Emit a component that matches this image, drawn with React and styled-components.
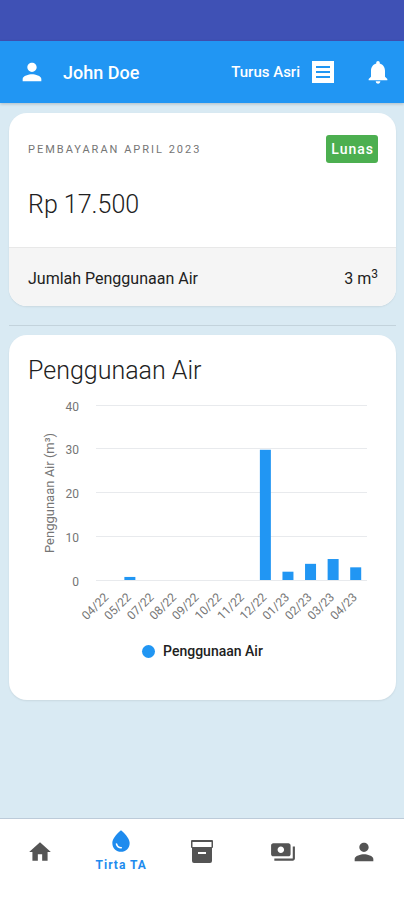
import React from "react";
import styled, { createGlobalStyle } from "styled-components";
import {
  MdHome,
  MdNotifications,
  MdPayments,
  MdPerson,
  MdWaterDrop,
} from "react-icons/md";

const GlobalStyle = createGlobalStyle`
  * {
    box-sizing: border-box;
  }
  body {
    margin: 0;
    background: #d9eaf3;
    font-family: Roboto, "Liberation Sans", sans-serif;
    color: #212121;
  }
`;

const Page = styled.div`
  display: flex;
  flex-direction: column;
  min-height: 100vh;
`;

const StatusBar = styled.div`
  height: 41px;
  background: #3f51b5;
`;

const Header = styled.header`
  display: flex;
  align-items: center;
  height: 62px;
  padding: 0 12px 0 18px;
  background: #2196f3;
  color: #fff;
  box-shadow: 0 1px 3px rgba(0, 0, 0, 0.2);
`;

const UserName = styled.h1`
  flex: 1;
  margin: 0 0 0 17px;
  font-size: 18px;
  font-weight: 500;
`;

const IconButton = styled.button`
  display: flex;
  padding: 0;
  border: 0;
  background: none;
  color: inherit;
  cursor: pointer;
`;

const AreaButton = styled(IconButton)`
  align-items: center;
  gap: 12px;
  margin-right: 30px;
  font-family: inherit;
  font-size: 15px;
  font-weight: 500;
`;

const Main = styled.main`
  flex: 1;
  padding: 10px 8px 10px 9px;
`;

const Card = styled.section`
  overflow: hidden;
  border-radius: 18px;
  background: #fff;
  box-shadow: 0 1px 2px rgba(0, 0, 0, 0.08);
`;

const BillTop = styled.div`
  height: 134px;
  padding: 22px 18px 0 19px;
`;

const BillRow = styled.div`
  display: flex;
  align-items: center;
  justify-content: space-between;
`;

const Overline = styled.h2`
  margin: 0;
  font-size: 11px;
  font-weight: 400;
  letter-spacing: 2px;
  color: #757575;
`;

const Badge = styled.span`
  padding: 0 4px 0 5px;
  border-radius: 3px;
  background: #4caf50;
  color: #fff;
  font-size: 14px;
  font-weight: 500;
  letter-spacing: 1px;
  line-height: 28px;
`;

const Amount = styled.p`
  margin: 27px 0 0;
  font-size: 25px;
  font-weight: 300;
  line-height: 30px;
`;

const Usage = styled(BillRow)`
  height: 59px;
  padding: 2px 18px 0 19px;
  border-top: 1px solid #e8e8e8;
  background: #f5f5f5;
  font-size: 16px;

  sup {
    font-size: 12px;
    line-height: 0;
  }
`;

const Divider = styled.hr`
  height: 1px;
  margin: 19px 0 9px;
  border: 0;
  background: #c3d3dc;
`;

const ChartCard = styled(Card)`
  padding-bottom: 39px;
`;

const ChartTitle = styled.h2`
  margin: 0;
  padding: 21px 19px 9px;
  font-size: 25px;
  font-weight: 300;
  line-height: 30px;
`;

const Chart = styled.svg`
  display: block;
  width: 100%;
  font-size: 12px;
  fill: #757575;

  line {
    stroke: #e8eaed;
    stroke-width: 1;
  }
`;

const AxisTitle = styled.text`
  font-size: 13px;
`;

const Legend = styled.div`
  display: flex;
  align-items: center;
  justify-content: center;
  gap: 8px;
  line-height: 20px;
  font-size: 14px;
  font-weight: 500;
`;

const LegendDot = styled.span`
  width: 13px;
  height: 13px;
  border-radius: 50%;
  background: #2196f3;
`;

const Nav = styled.nav`
  display: grid;
  grid-template-columns: repeat(5, 1fr);
  height: 82px;
  padding-bottom: 16px;
  border-top: 1px solid #bccbd9;
  background: #fff;
`;

const NavItem = styled.a`
  display: flex;
  flex-direction: column;
  align-items: center;
  justify-content: center;
  color: ${(props) => (props.$active ? "#1e8bee" : "#545454")};
  font-size: 12px;
  font-weight: 700;
  letter-spacing: 1px;
  line-height: 22px;
  text-decoration: none;
`;

const usage = [
  { month: "04/22", value: 0 },
  { month: "05/22", value: 0.7 },
  { month: "07/22", value: 0 },
  { month: "08/22", value: 0 },
  { month: "09/22", value: 0 },
  { month: "10/22", value: 0 },
  { month: "11/22", value: 0 },
  { month: "12/22", value: 29.8 },
  { month: "01/23", value: 1.9 },
  { month: "02/23", value: 3.7 },
  { month: "03/23", value: 4.8 },
  { month: "04/23", value: 2.9 },
];

const LEFT = 87;
const RIGHT = 358;
const BASE = 185;
const UNIT = 4.37;
const BAND = (RIGHT - LEFT) / usage.length;

const ListIcon = () => (
  <svg width="22" height="22" viewBox="0 0 22 22" aria-hidden="true">
    <path fill="currentColor" d="M0 0h22v22H0z" />
    <path stroke="#2196f3" strokeWidth="2" d="M4 6h14M4 11h14M4 16h14" />
  </svg>
);

const ArchiveIcon = () => (
  <svg width="24" height="24" viewBox="0 0 24 24" aria-hidden="true">
    <path
      fill="currentColor"
      fillRule="evenodd"
      d="M2 0h20a1 1 0 0 1 1 1v6a1 1 0 0 1-1 1v13a2 2 0 0 1-2 2H4a2 2 0 0 1-2-2V8a1 1 0 0 1-1-1V1a1 1 0 0 1 1-1zm.5 2v5h19V2zM8 12v2h8v-2z"
    />
  </svg>
);

const UsageChart = () => (
  <Chart viewBox="0 0 387 246" role="img" aria-label="Penggunaan Air (m³)">
    {[0, 10, 20, 30, 40].map((tick) => {
      const y = Math.floor(BASE - tick * UNIT) + 0.5;
      return (
        <g key={tick}>
          <line x1={LEFT} x2={RIGHT} y1={y} y2={y} />
          <text x="70" y={y + 5} textAnchor="end">
            {tick}
          </text>
        </g>
      );
    })}
    <AxisTitle transform="translate(45 98) rotate(-90)" textAnchor="middle">
      Penggunaan Air (m³)
    </AxisTitle>
    {usage.map(({ month, value }, i) => {
      const x = LEFT + BAND * (i + 0.5);
      return (
        <g key={month}>
          <rect
            x={x - 5.5}
            y={BASE - value * UNIT}
            width="11"
            height={value * UNIT}
            fill="#2196f3"
          />
          <text
            transform={`translate(${x + 2} 203) rotate(-45)`}
            textAnchor="end"
          >
            {month}
          </text>
        </g>
      );
    })}
  </Chart>
);

const App = () => (
  <Page>
    <GlobalStyle />
    <StatusBar />
    <Header>
      <IconButton type="button" aria-label="Profil">
        <MdPerson size={28} />
      </IconButton>
      <UserName>John Doe</UserName>
      <AreaButton type="button">
        Turus Asri
        <ListIcon />
      </AreaButton>
      <IconButton type="button" aria-label="Notifikasi">
        <MdNotifications size={28} />
      </IconButton>
    </Header>

    <Main>
      <Card>
        <BillTop>
          <BillRow>
            <Overline>PEMBAYARAN APRIL 2023</Overline>
            <Badge>Lunas</Badge>
          </BillRow>
          <Amount>Rp 17.500</Amount>
        </BillTop>
        <Usage>
          <span>Jumlah Penggunaan Air</span>
          <span>
            3 m<sup>3</sup>
          </span>
        </Usage>
      </Card>

      <Divider />

      <ChartCard>
        <ChartTitle>Penggunaan Air</ChartTitle>
        <UsageChart />
        <Legend>
          <LegendDot />
          Penggunaan Air
        </Legend>
      </ChartCard>
    </Main>

    <Nav>
      <NavItem href="#home" aria-label="Beranda">
        <MdHome size={26} />
      </NavItem>
      <NavItem href="#tirta" $active>
        <MdWaterDrop size={26} />
        Tirta TA
      </NavItem>
      <NavItem href="#archive" aria-label="Arsip">
        <ArchiveIcon />
      </NavItem>
      <NavItem href="#payments" aria-label="Pembayaran">
        <MdPayments size={26} />
      </NavItem>
      <NavItem href="#account" aria-label="Akun">
        <MdPerson size={28} />
      </NavItem>
    </Nav>
  </Page>
);

export default App;
